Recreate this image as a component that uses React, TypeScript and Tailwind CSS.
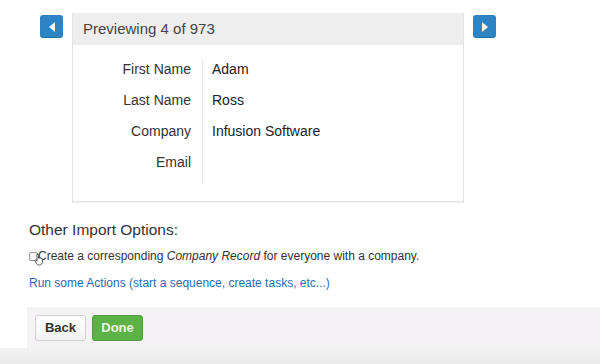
import React from 'react';

const rows: [string, string][] = [
  ['First Name', 'Adam'],
  ['Last Name', 'Ross'],
  ['Company', 'Infusion Software'],
  ['Email', ''],
];

function NavButton({ dir }: { dir: 'left' | 'right' }) {
  return (
    <button className="mt-[2px] flex h-[23px] w-[23px] items-center justify-center rounded-[3px] bg-[#2d84c4] shadow-[inset_0_-1px_0_rgba(0,0,0,0.15)]">
      <svg width="10" height="12" viewBox="0 0 10 12">
        {dir === 'left' ? (
          <path d="M8 1 L2 6 L8 11 Z" fill="#fff" />
        ) : (
          <path d="M2 1 L8 6 L2 11 Z" fill="#fff" />
        )}
      </svg>
    </button>
  );
}

export default function App() {
  return (
    <div className="relative flex h-[364px] w-[600px] flex-col overflow-hidden bg-white font-['Liberation_Sans',Arial,sans-serif]">
      {/* preview card with arrows */}
      <div className="flex items-start gap-[9px] pl-[40px] pt-[13px]">
        <NavButton dir="left" />
        <div className="w-[392px] border border-t-0 border-[#e4e4e4] shadow-[0_1px_1px_rgba(0,0,0,0.06)]">
          <div className="flex h-[32px] items-center bg-[#efeeef] pl-[10px] text-[15px] text-[#444]">
            Previewing 4 of 973
          </div>
          <div className="flex pb-[17px] pt-[15px] text-[14px] leading-[18px]">
            <div className="w-[129px] pr-[11px] text-right text-[#333]">
              {rows.map(([label]) => (
                <div key={label} className="h-[31px]">
                  {label}
                </div>
              ))}
            </div>
            <div className="border-l border-[#e6e6e6] pl-[9px] text-[#222]">
              {rows.map(([label, value]) => (
                <div key={label} className="h-[31px]">
                  {value}
                </div>
              ))}
            </div>
          </div>
        </div>
        <NavButton dir="right" />
      </div>

      {/* other options */}
      <div className="pl-[29px] pt-[18px]">
        <div className="text-[15.5px] leading-[20px] text-[#333]">Other Import Options:</div>
        <label className="relative mt-[8px] flex items-center text-[12px] leading-[16px] text-[#333]">
          <span className="mr-[1px] h-[9px] w-[9px] rounded-[2px] border border-[#9a9a9a] bg-[#f4f4f4]" />
          <span className="ml-[-1px]">
            Create a corresponding <i>Company Record</i> for everyone with a company.
          </span>
          <svg
            className="absolute left-[5px] top-[5px]"
            width="11"
            height="13"
            viewBox="0 0 11 13"
          >
            <path
              d="M3 1.2 C3 0.5 4.3 0.5 4.3 1.2 L4.3 5.5 L4.6 4.6 C4.6 4 5.8 4 5.8 4.7 L5.8 5.3 C5.9 4.7 7.1 4.7 7.1 5.4 L7.1 5.9 C7.2 5.3 8.4 5.3 8.4 6 L8.4 9 C8.4 10.6 7.4 12 5.8 12 L4.8 12 C3.6 12 3 11.3 2.4 10.3 L0.9 7.6 C0.6 7 1.4 6.5 1.9 7 L3 8.2 Z"
              fill="#fff"
              stroke="#333"
              strokeWidth="0.8"
            />
          </svg>
        </label>
        <a className="mt-[11px] block text-[12px] leading-[16px] text-[#2a6cb5]">
          Run some Actions (start a sequence, create tasks, etc...)
        </a>
      </div>

      {/* footer */}
      <div className="ml-[27px] mt-[16px] flex h-[41px] items-center gap-[6px] bg-[#f4f2f5] pl-[8px]">
        <button className="h-[26px] w-[51px] rounded-[3px] border border-[#d2d2d2] bg-gradient-to-b from-white to-[#f2f2f2] text-[13px] font-bold text-[#333]">
          Back
        </button>
        <button className="h-[26px] w-[51px] rounded-[3px] border border-[#4f9c3a] bg-[#5cb247] text-[13px] font-bold text-[#e9f6e4]">
          Done
        </button>
      </div>
      <div className="flex-1 bg-gradient-to-b from-[#f3f3f3] to-[#ebebeb]" />
    </div>
  );
}
